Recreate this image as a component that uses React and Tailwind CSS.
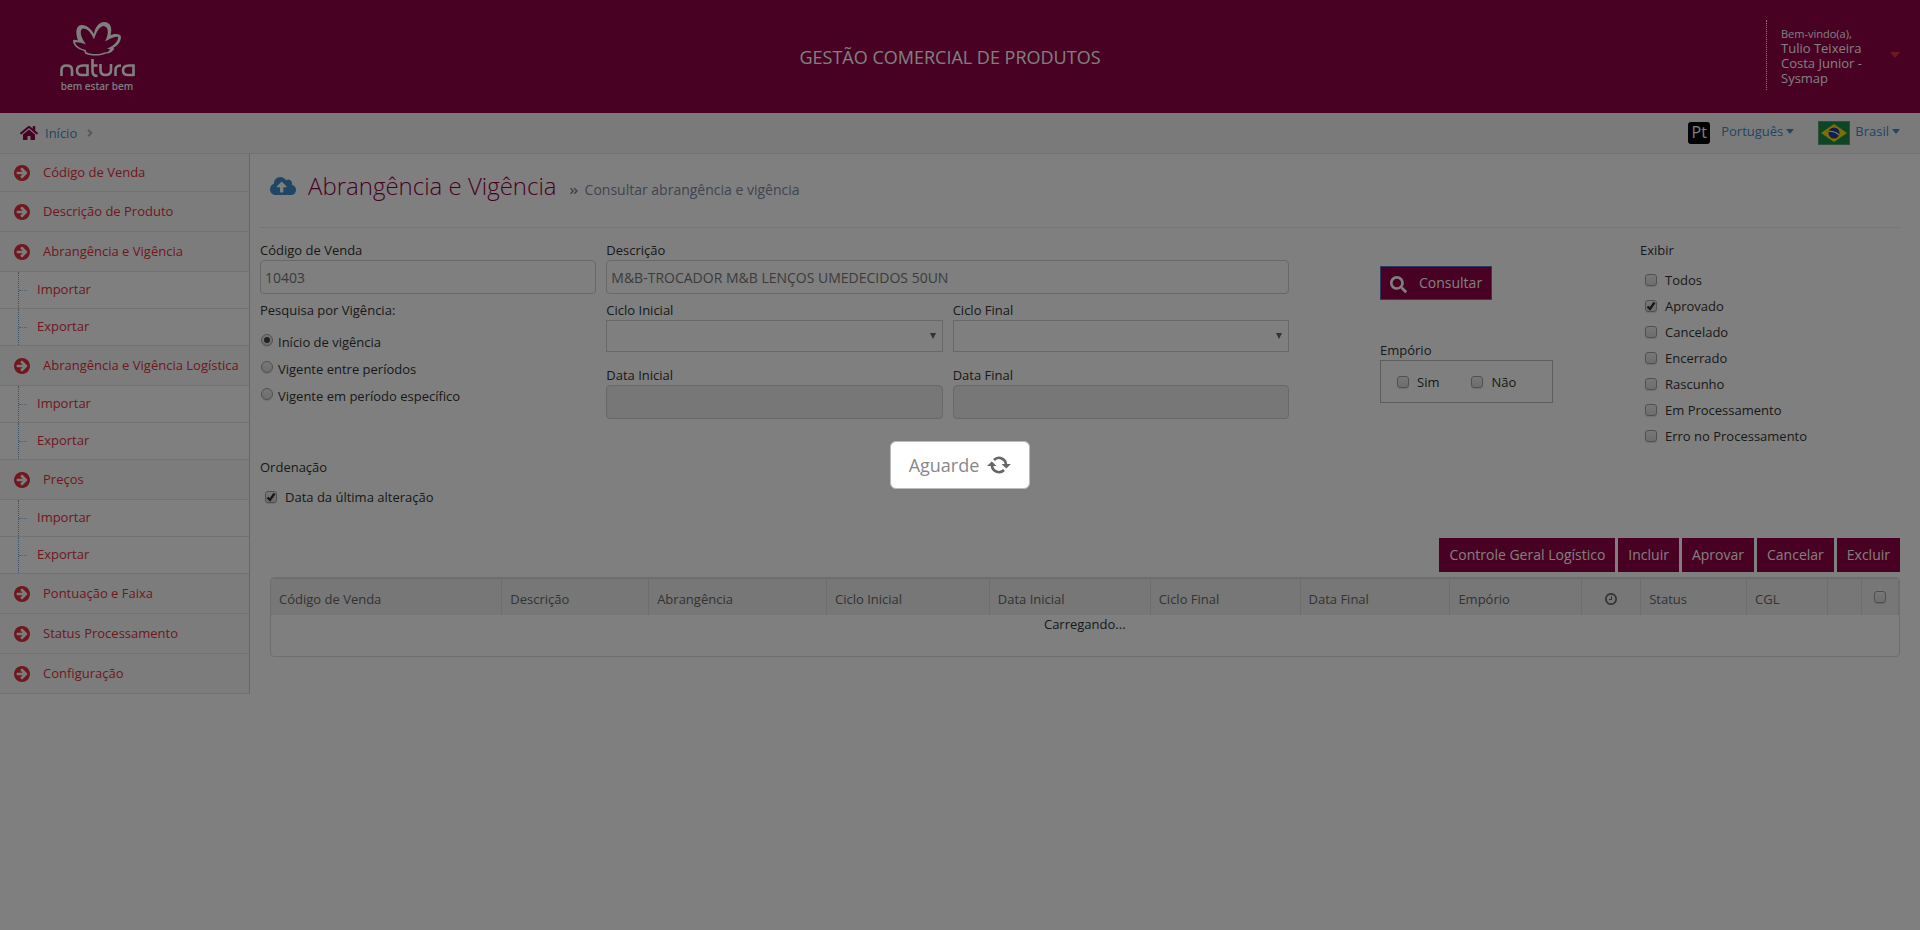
import React from "react";
import { FaHome, FaAngleRight, FaAngleDoubleRight, FaCloudUploadAlt, FaSearch } from "react-icons/fa";

const MENU = [
  { label: "Código de Venda" },
  { label: "Descrição de Produto" },
  { label: "Abrangência e Vigência", children: ["Importar", "Exportar"] },
  { label: "Abrangência e Vigência Logística", children: ["Importar", "Exportar"] },
  { label: "Preços", children: ["Importar", "Exportar"] },
  { label: "Pontuação e Faixa" },
  { label: "Status Processamento" },
  { label: "Configuração" },
];

const EXIBIR = ["Todos", "Aprovado", "Cancelado", "Encerrado", "Rascunho", "Em Processamento", "Erro no Processamento"];

const ACTIONS = ["Controle Geral Logístico", "Incluir", "Aprovar", "Cancelar", "Excluir"];

const COLUMNS = [
  { key: "codigo", label: "Código de Venda", weight: 231 },
  { key: "descricao", label: "Descrição", weight: 147 },
  { key: "abrangencia", label: "Abrangência", weight: 178 },
  { key: "ciclo-inicial", label: "Ciclo Inicial", weight: 163 },
  { key: "data-inicial", label: "Data Inicial", weight: 161 },
  { key: "ciclo-final", label: "Ciclo Final", weight: 150 },
  { key: "data-final", label: "Data Final", weight: 150 },
  { key: "emporio", label: "Empório", weight: 132 },
  { key: "historico", label: <ClockIcon />, weight: 59 },
  { key: "status", label: "Status", weight: 106 },
  { key: "cgl", label: "CGL", weight: 81 },
  { key: "acoes", label: "", weight: 34 },
  { key: "selecionar", label: <SelectAll />, weight: 37 },
];

const TOTAL_WEIGHT = COLUMNS.reduce((sum, column) => sum + column.weight, 0);

function Logo() {
  return (
    <svg viewBox="0 0 76 72" className="h-[72px] w-[76px] text-white" role="img" aria-label="natura bem estar bem">
      <path
        transform="translate(0 -2)"
        fillRule="evenodd"
        fill="currentColor"
        d="M13 20.500C13.500 19.500 16 19.500 18 20.500C15 12 16 5 22 5C27 5 31 9 34 14C35 7 39 2 44 2C51 2 52.500 9 50.500 15C54 13.500 61 13 61 17C61 22 57 26.500 53 28C55 28.500 54.500 30 52.500 30.500C53 32 49 33.500 46 33.500C42 36 30 36.500 25 33.500C24.500 32 25 31.500 23 30.500C17 29 13 25 13 20.500ZM15 22.500C16 26 20 28.500 26 30C25.500 31 26 32 27 32.500C31 34.500 40 34.500 44 32.500C47 32.500 49 31.500 49 30.500C51 30 50 29 47 28.500C54 26 58.500 21 58 17C55 16 50 18.500 45 21.500C48 16 50 7 43.500 6C39 6.500 36 13 34 19.500C31.500 13 27.500 8.500 23 8.500C19 10 20.500 17 26 24.500C21 22.500 18 22 15 22.500Z"
      />
      <g fill="none" stroke="currentColor" strokeWidth="2.6">
        <path d="M1.500 54V48Q1.500 43.500 6.500 43.500Q12 43.500 12 48V54" />
        <path d="M27.500 54V43.500H23Q17 43.500 17 48.500Q17 53 22 53H27.500" />
        <path d="M32.500 37V49Q32.500 54 37.500 54M32 43.500H37.500" />
        <path d="M40.500 42V48Q40.500 53 45.500 53Q51 53 51 48V42" />
        <path d="M55.500 54V48Q55.500 43.500 61 43.500" />
        <path d="M73.500 54V43.500H69Q63 43.500 63 48.500Q63 53 68 53H73.500" />
      </g>
      <text x="37" y="68" textAnchor="middle" fill="currentColor" fontSize="10" fontWeight="500" fontFamily="'Noto Sans', 'Open Sans', sans-serif">
        bem estar bem
      </text>
    </svg>
  );
}

function BrazilFlag() {
  return (
    <svg viewBox="0 0 32 24" className="h-6 w-8" aria-hidden="true">
      <rect width="32" height="24" rx="1" fill="#1f8a44" />
      <rect x=".5" y=".5" width="31" height="23" fill="none" stroke="#5c9f72" />
      <path d="M16 3L29 12L16 21L3 12Z" fill="#f0e010" />
      <circle cx="16" cy="12" r="5.500" fill="#28388f" />
      <path d="M11 10.500Q17 10 21 14" fill="none" stroke="#dfe8ef" strokeWidth="1.200" />
    </svg>
  );
}

function ArrowCircle() {
  return (
    <svg viewBox="128 128 1536 1536" className="size-4 shrink-0" fill="currentColor" aria-hidden="true">
      <path d="M1413 896q0-27-18-45l-91-91-362-362q-18-18-45-18t-45 18l-91 91q-18 18-18 45t18 45l189 189h-502q-26 0-45 19t-19 45v128q0 26 19 45t45 19h502l-189 189q-19 19-19 45t19 45l91 91q18 18 45 18t45-18l362-362 91-91q18-18 18-45zm251 0q0 209-103 385.500t-279.500 279.500-385.500 103-385.500-103-279.500-279.500-103-385.500 103-385.500 279.500-279.500 385.500-103 385.500 103 279.500 279.500 103 385.500z" />
    </svg>
  );
}

function ClockIcon() {
  return (
    <svg viewBox="128 128 1536 1536" className="mx-auto size-3" fill="currentColor" role="img" aria-label="Histórico">
      <path d="M1024 544v448q0 14-9 23t-23 9h-320q-14 0-23-9t-9-23v-64q0-14 9-23t23-9h224v-352q0-14 9-23t23-9h64q14 0 23 9t9 23zm416 352q0-148-73-273t-198-198-273-73-273 73-198 198-73 273 73 273 198 198 273 73 273-73 198-198 73-273zm224 0q0 209-103 385.500t-279.500 279.500-385.500 103-385.500-103-279.500-279.500-103-385.500 103-385.500 279.500-279.500 385.500-103 385.500 103 279.500 279.500 103 385.500z" />
    </svg>
  );
}

function SyncIcon() {
  return (
    <svg viewBox="0 0 24 20" className="h-5 w-6 text-[#666]" aria-hidden="true">
      <g fill="none" stroke="currentColor" strokeWidth="2.600">
        <path d="M7 5A7 7 0 0 1 19 10" />
        <path d="M17 15A7 7 0 0 1 5 10" />
      </g>
      <path d="M14.500 9H24L19.200 13.500Z" fill="currentColor" />
      <path d="M9.500 11H0L4.800 6.500Z" fill="currentColor" />
    </svg>
  );
}

function Caret() {
  return (
    <svg viewBox="0 0 8 5" className="h-[5px] w-2" aria-hidden="true">
      <path d="M0 0H8L4 5Z" fill="currentColor" />
    </svg>
  );
}

function Tick({ type = "checkbox", checked = false, name, label }) {
  const shape = type === "radio" ? "rounded-full" : "rounded-[3px]";
  return (
    <span className="relative flex size-3 shrink-0">
      <input
        type={type}
        name={name}
        defaultChecked={checked}
        aria-label={label}
        className={`peer m-0 size-3 appearance-none border border-[#a0a0a0] bg-linear-to-b from-[#f0f0f0] to-[#dcdcdc] shadow-[0_1px_1px_rgba(0,0,0,0.12)] ${shape}`}
      />
      {type === "radio" ? (
        <span className="pointer-events-none absolute inset-[3px] hidden rounded-full bg-[#444] peer-checked:block" />
      ) : (
        <svg viewBox="0 0 12 12" className="pointer-events-none absolute inset-0 hidden size-3 peer-checked:block" aria-hidden="true">
          <path d="M2.500 6.500L5 9L9.500 2.500" fill="none" stroke="#333" strokeWidth="2.400" />
        </svg>
      )}
    </span>
  );
}

function SelectAll() {
  return (
    <span className="flex justify-center pb-1">
      <Tick label="Selecionar todos" />
    </span>
  );
}

function Field({ id, label, children }) {
  return (
    <div className="flex min-w-0 flex-1 flex-col">
      <label htmlFor={id} className="leading-5">
        {label}
      </label>
      {children}
    </div>
  );
}

const INPUT = "h-[34px] w-full rounded-[4px] border border-[#d0d0d0] px-1 text-sm text-[#777]";

function SelectField({ id, label }) {
  return (
    <Field id={id} label={label}>
      <div className="relative mb-[7px]">
        <select id={id} className="h-8 w-full appearance-none border border-[#d0d0d0] bg-white px-1 text-sm">
          <option></option>
        </select>
        <svg viewBox="0 0 6 6" className="pointer-events-none absolute top-[13px] right-[7px] size-[6px]" aria-hidden="true">
          <path d="M0 0H6L3 6Z" fill="#666" />
        </svg>
      </div>
    </Field>
  );
}

function Sidebar() {
  return (
    <nav className="w-[250px] shrink-0 self-start border-r border-[#ccc]">
      <ul>
        {MENU.map((item) => (
          <li key={item.label} className="group">
            <a
              href="#"
              className="flex h-10 items-center gap-[13px] border-b border-[#e5e5e5] bg-[#f9f9f9] pl-[14px] text-[#e1303f] group-first:h-[38px]"
            >
              <ArrowCircle />
              <span className="pb-[2px] whitespace-nowrap">{item.label}</span>
            </a>
            {item.children && (
              <ul>
                {item.children.map((child) => (
                  <li key={child} className="border-b border-[#e5e5e5] pl-[18px]">
                    <a href="#" className="flex h-9 items-center border-l border-dotted border-[#7fa7c9] text-[#e1303f]">
                      <span className="w-2 border-t border-dotted border-[#9dbdd6]" />
                      <span className="pb-[2px] pl-[10px]">{child}</span>
                    </a>
                  </li>
                ))}
              </ul>
            )}
          </li>
        ))}
      </ul>
    </nav>
  );
}

function ResultsTable() {
  return (
    <div className="overflow-hidden rounded-[4px] border border-[#ddd]">
      <table className="w-full table-fixed border-collapse">
        <colgroup>
          {COLUMNS.map((column) => (
            <col key={column.key} style={{ width: `${(column.weight / TOTAL_WEIGHT) * 100}%` }} />
          ))}
        </colgroup>
        <thead className="border-t border-[#ddd] bg-[#efefef] text-[#666]">
          <tr className="h-9">
            {COLUMNS.map((column) => (
              <th key={column.key} className="border-r border-[#ddd] px-2 pt-1 text-left align-middle font-medium">
                {column.label}
              </th>
            ))}
          </tr>
        </thead>
        <tbody>
          <tr className="h-[41px]">
            <td colSpan={COLUMNS.length} className="text-center align-top leading-[18px]">
              Carregando...
            </td>
          </tr>
        </tbody>
      </table>
    </div>
  );
}

export default function App() {
  return (
    <div className="min-h-screen bg-white font-['Open_Sans',sans-serif] text-[13px] leading-5 text-[#333]">
      <header className="grid h-[113px] grid-cols-[1fr_auto_1fr] items-center bg-[#900046] text-white">
        <a href="#" className="ml-[60px] justify-self-start pt-[2px]">
          <Logo />
        </a>
        <h1 className="mr-5 text-lg">GESTÃO COMERCIAL DE PRODUTOS</h1>
        <button type="button" className="mr-5 mb-1 flex items-center justify-self-end border-l border-dotted border-white pl-[14px] text-left">
          <span className="flex h-[70px] w-[109px] flex-col justify-end pb-1 leading-[15px]">
            <small className="text-[11px]">Bem-vindo(a),</small>
            <span className="w-[90px]">Tulio Teixeira Costa Junior - Sysmap</span>
          </span>
          <svg viewBox="0 0 10 6" className="h-[6px] w-[10px]" aria-hidden="true">
            <path d="M0 0H10L5 6Z" fill="#e1303f" />
          </svg>
        </button>
      </header>

      <div className="flex h-[41px] items-center justify-between border-b border-[#e5e5e5] bg-[#f5f5f5] px-5 text-[#428bca]">
        <a href="#" className="flex items-center gap-[7px]">
          <FaHome className="size-[18px] text-[#900046]" />
          Início
          <FaAngleRight className="size-3 text-[#aaa]" />
        </a>
        <div className="flex items-center gap-6">
          <button type="button" className="flex items-center gap-[11px]">
            <span className="flex size-[22px] items-center justify-center rounded-[3px] bg-black pb-[2px] text-base font-medium text-white">
              Pt
            </span>
            <span className="flex items-center gap-[3px] pb-1">
              Português
              <Caret />
            </span>
          </button>
          <button type="button" className="flex items-center gap-[5px]">
            <BrazilFlag />
            <span className="flex items-center gap-[3px] pb-1">
              Brasil
              <Caret />
            </span>
          </button>
        </div>
      </div>

      <div className="flex">
        <Sidebar />
        <main className="min-w-0 flex-1 pr-5 pl-[10px]">
          <div className="flex h-[74px] items-start gap-3 border-b border-dotted border-[#ddd] pt-4 pl-[10px]">
            <FaCloudUploadAlt className="mt-[3px] size-[26px] text-[#428bca]" />
            <h2 className="text-2xl font-light text-[#900046]">Abrangência e Vigência</h2>
            <p className="flex items-center gap-[6px] pt-[10px] text-sm leading-5 text-[#8089a0]">
              <FaAngleDoubleRight className="mt-[2px] size-[10px]" />
              Consultar abrangência e vigência
            </p>
          </div>

          <form className="grid grid-cols-[minmax(0,1029fr)_minmax(0,611fr)] pt-3">
            <div>
              <div className="grid grid-cols-3 gap-x-[10px] gap-y-[6px]">
                <Field id="codigo" label="Código de Venda">
                  <input id="codigo" defaultValue="10403" className={INPUT} />
                </Field>
                <div className="col-span-2">
                  <Field id="descricao" label="Descrição">
                    <input id="descricao" defaultValue="M&B-TROCADOR M&B LENÇOS UMEDECIDOS 50UN" className={INPUT} />
                  </Field>
                </div>
                <fieldset className="row-span-2">
                  <legend>Pesquisa por Vigência:</legend>
                  <div className="flex flex-col gap-[7px] pt-3 pl-px">
                    {["Início de vigência", "Vigente entre períodos", "Vigente em período específico"].map((label, i) => (
                      <label key={label} className="flex items-start gap-[5px]">
                        <span className="pt-[2px]">
                          <Tick type="radio" name="vigencia" checked={i === 0} />
                        </span>
                        {label}
                      </label>
                    ))}
                  </div>
                </fieldset>
                <SelectField id="ciclo-inicial" label="Ciclo Inicial" />
                <SelectField id="ciclo-final" label="Ciclo Final" />
                <Field id="data-inicial" label="Data Inicial">
                  <input id="data-inicial" disabled className={`${INPUT} bg-[#eee]`} />
                </Field>
                <Field id="data-final" label="Data Final">
                  <input id="data-final" disabled className={`${INPUT} bg-[#eee]`} />
                </Field>
              </div>
              <fieldset className="pt-[38px]">
                <legend className="contents">Ordenação</legend>
                <label className="flex items-center gap-2 pt-[10px] pl-[5px]">
                  <Tick checked />
                  Data da última alteração
                </label>
              </fieldset>
            </div>

            <div className="grid grid-cols-2 pl-[91px]">
              <div className="flex flex-col items-start pt-[26px]">
                <button
                  type="button"
                  className="flex h-[34px] items-center gap-3 border border-[#5a74c8] bg-[#900046] px-[9px] text-sm text-white"
                >
                  <FaSearch className="mt-[2px] size-[17px]" />
                  Consultar
                </button>
                <fieldset className="pt-10">
                  <legend className="contents">Empório</legend>
                  <div className="flex h-[43px] w-[173px] items-center gap-8 border border-[#bbb] pl-4">
                    <label className="flex items-center gap-2">
                      <Tick />
                      Sim
                    </label>
                    <label className="flex items-center gap-2">
                      <Tick />
                      Não
                    </label>
                  </div>
                </fieldset>
              </div>
              <fieldset>
                <legend>Exibir</legend>
                <div className="flex flex-col gap-[6px] pt-[10px] pl-[5px]">
                  {EXIBIR.map((label) => (
                    <label key={label} className="flex items-center gap-2">
                      <Tick checked={label === "Aprovado"} />
                      {label}
                    </label>
                  ))}
                </div>
              </fieldset>
            </div>
          </form>

          <section className="pt-[31px] pl-[10px]">
            <div className="flex justify-end gap-[3px] pb-[5px]">
              {ACTIONS.map((label) => (
                <button key={label} type="button" className="h-[34px] bg-[#900046] px-[10px] text-sm text-white">
                  {label}
                </button>
              ))}
            </div>
            <ResultsTable />
          </section>
        </main>
      </div>

      <div className="fixed inset-0 flex items-center justify-center bg-black/50">
        <div role="status" className="flex h-12 items-center gap-2 rounded-md border border-[#bbb] bg-white px-[18px] text-lg font-medium text-[#888]">
          Aguarde
          <SyncIcon />
        </div>
      </div>
    </div>
  );
}
